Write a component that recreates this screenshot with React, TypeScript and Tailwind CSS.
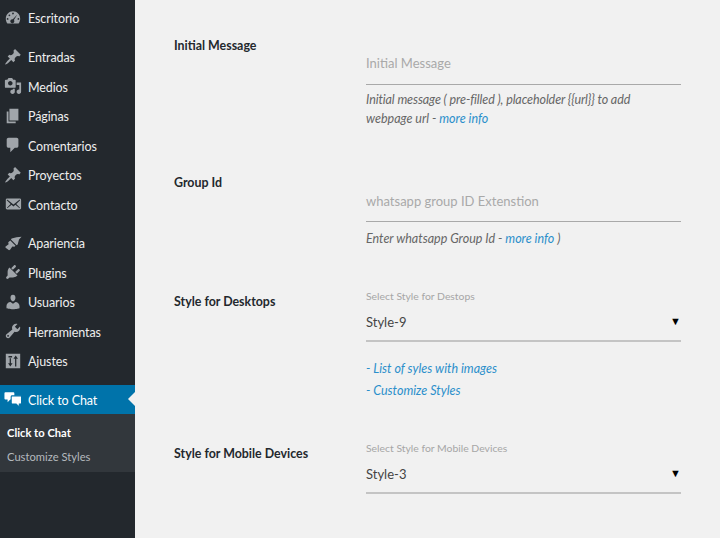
import React from "react";

const icons: Record<string, React.ReactNode> = {
  dash: <path fillRule="evenodd" d="M3.760 16h12.480c1.100-1.430 1.760-3.230 1.760-5.190 0-4.600-3.580-8.330-8-8.330s-8 3.730-8 8.330c0 1.960.66 3.760 1.760 5.190zM10 4c.55 0 1 .45 1 1s-.45 1-1 1-1-.45-1-1 .45-1 1-1zM6 6c.55 0 1 .45 1 1s-.45 1-1 1-1-.45-1-1 .45-1 1-1zm8.830.17L10.990 12.100c.32.390.51.880.51 1.400 0 1.240-1.010 2.250-2.250 2.250S7 14.740 7 13.500s1.010-2.250 2.250-2.250c.200 0 .39.030.57.080l5.010-5.160zM4 10c.55 0 1 .45 1 1s-.45 1-1 1-1-.45-1-1 .45-1 1-1zm12 0c.55 0 1 .45 1 1s-.45 1-1 1-1-.45-1-1 .45-1 1-1z" />,
  pin: <path d="M10.440 3.020l1.820-1.820 6.360 6.350-1.830 1.820c-1.050-.68-2.480-.57-3.410.36l-.75.75c-.92.93-1.040 2.350-.35 3.410l-1.830 1.820-2.410-2.410-2.800 2.790c-.42.42-3.380 2.710-3.800 2.290s1.860-3.390 2.280-3.810l2.790-2.790L4.100 9.360l1.830-1.820c1.050.69 2.480.57 3.400-.36l.75-.75c.93-.92 1.050-2.350.36-3.410z" />,
  media: <path fillRule="evenodd" d="M13 11V4c0-.55-.45-1-1-1h-1.670L9 1H5L3.670 3H2c-.55 0-1 .45-1 1v7c0 .55.45 1 1 1h10c.55 0 1-.45 1-1zM7 4.500c1.380 0 2.500 1.120 2.500 2.500S8.380 9.500 7 9.500 4.500 8.380 4.500 7 5.620 4.500 7 4.500zM14 6h5v10.500c0 1.380-1.120 2.500-2.500 2.500S14 17.880 14 16.500s1.120-2.500 2.500-2.500c.17 0 .34.020.5.050V9h-3V6zm-4 8.050V13h2v3.500c0 1.380-1.120 2.500-2.500 2.500S7 17.880 7 16.500 8.120 14 9.500 14c.17 0 .34.020.5.050z" />,
  pages: <path d="M6 15V2h10v13H6zm-1 1h8v2H3V5h2v11z" />,
  comment: <path d="M5 2h9c1.100 0 2 .9 2 2v7c0 1.100-.9 2-2 2h-2l-5 5v-5H5c-1.100 0-2-.9-2-2V4c0-1.100.9-2 2-2z" />,
  mail: <path d="M19 14.500v-9c0-.83-.67-1.500-1.500-1.500H3.490c-.83 0-1.500.67-1.500 1.500v9c0 .83.67 1.500 1.500 1.500H17.500c.83 0 1.500-.67 1.500-1.500zm-1.310-9.110c.33.33.15.67-.03.84L13.600 9.950l3.900 4.060c.12.14.2.36.06.51-.13.16-.43.15-.56.05l-4.370-3.730-2.140 1.950-2.130-1.950-4.370 3.730c-.13.100-.43.110-.56-.050-.14-.15-.06-.37.06-.51l3.900-4.060-4.060-3.720c-.18-.17-.36-.51-.03-.84s.67-.17.950.07l6.240 5.040 6.250-5.040c.28-.24.62-.4.950-.07z" />,
  brush: <path d="M19.500 3l-5.500.5-5.500 1.500-.8 1.200 6.300 6.300 1.200-.8 1.500-5.500L19.500 3zM7 7.200L12.800 13l-1.300 1.300-2.200-.4-2.600 3.600-1.100.5-3.800-2.800-.3-1.100 3.600-2.600-.4-2.200L7 7.200z" />,
  plug: <path d="M13.110 4.360L9.870 7.600 8 5.730l3.240-3.240c.35-.34 1.050-.2 1.560.32.52.51.66 1.210.31 1.550zm-8 1.770l.91-1.120 9.010 9.010-1.190.84c-.71.71-2.630 1.160-3.820 1.160H6.140L4.900 17.260c-.59.59-1.540.59-2.120 0-.59-.58-.59-1.530 0-2.120l1.240-1.240v-3.880c0-1.130.52-3.170 1.090-3.890zm7.260 3.970l3.240-3.240c.34-.35 1.040-.21 1.550.31.52.51.66 1.210.31 1.550l-3.240 3.250z" />,
  user: <path d="M10 9.250c-2.270 0-2.730-3.440-2.730-3.440C7 4.020 7.820 2 9.970 2c2.160 0 2.980 2.020 2.710 3.810 0 0-.41 3.440-2.680 3.440zm0 2.570L12.720 10c2.390 0 4.520 2.330 4.520 4.530v2.490s-3.650 1.130-7.240 1.130c-3.650 0-7.240-1.130-7.240-1.130v-2.490c0-2.250 1.940-4.480 4.470-4.480z" />,
  wrench: <path fillRule="evenodd" d="M16.680 9.770c-1.340 1.340-3.300 1.670-4.950.99l-5.410 6.520c-.99.99-2.590.99-3.580 0s-.99-2.590 0-3.570l6.520-5.420c-.68-1.650-.35-3.610.99-4.950 1.280-1.280 3.120-1.620 4.720-1.060l-2.890 2.890 2.820 2.820 2.860-2.860c.53 1.580.18 3.400-1.080 4.640zM3.810 16.210c.4.390 1.040.39 1.430 0 .4-.4.4-1.040 0-1.430-.39-.4-1.030-.4-1.430 0-.39.39-.39 1.030 0 1.430z" />,
  settings: <path fillRule="evenodd" d="M2 2h16v16H2V2zm3 2.500V6h4V4.500H5zM6.300 7v5.500H4.500L7 16l2.500-3.500H7.700V7H6.300zM13 4l-2.500 3.500h1.800V16h1.400V7.500h1.800L13 4z" />,
};

const Chat = () => (
  <svg viewBox="0 0 20 20" className="w-[18px] h-[18px] shrink-0 fill-white">
    <path d="M1.500 2.500h9a1 1 0 0 1 1 1v6a1 1 0 0 1-1 1H7l-3 3v-3H1.500a1 1 0 0 1-1-1v-6a1 1 0 0 1 1-1z" />
    <path className="stroke-[#0073aa]" strokeWidth="1.2" d="M9 6.500h9.500a1 1 0 0 1 1 1v7a1 1 0 0 1-1 1H17v3.500l-3.500-3.500H9a1 1 0 0 1-1-1v-7a1 1 0 0 1 1-1z" />
  </svg>
);

const Item = ({ icon, label, active }: { icon: string; label: string; active?: boolean }) => (
  <div className={`relative flex items-center h-[29.5px] pl-[3.5px] ${active ? "bg-[#0073aa]" : ""}`}>
    {active ? (
      <Chat />
    ) : (
      <svg viewBox="0 0 20 20" className="w-[18px] h-[18px] shrink-0 fill-[#a0a5aa]">{icons[icon]}</svg>
    )}
    <span className={`ml-[6.5px] pt-[4px] text-[12.5px] tracking-[-0.1px] ${active ? "text-white" : "text-[#eeeeee]"}`}>{label}</span>
    {active && (
      <span className="absolute right-0 top-[7px] w-0 h-0 border-y-[7.5px] border-y-transparent border-r-[7px] border-r-[#f1f1f1]" />
    )}
  </div>
);

const Link = ({ children }: { children: React.ReactNode }) => <span className="text-[#2b8fcb]">{children}</span>;

const Select = ({ caption, value }: { caption: string; value: string }) => (
  <div>
    <div className="text-[10.4px] leading-[14px] text-[#a6a6a6]">{caption}</div>
    <div className="flex items-center justify-between h-[35px] mt-[4px] text-[13px] text-[#444444] border-b-2 border-[#c4c4c4]">
      <span className="-mt-[1px]">{value}</span>
      <span className="-mt-[4px] text-[11px] text-black">▼</span>
    </div>
  </div>
);

const Input = ({ placeholder, pad }: { placeholder: string; pad: string }) => (
  <div className={`h-[55px] flex items-center text-[13px] text-[#a9a9a9] border-b border-[#a9a9a9] ${pad}`}>
    <span>{placeholder}</span>
  </div>
);

const Label = ({ children, top }: { children: React.ReactNode; top?: boolean }) => (
  <div className={`w-[192px] shrink-0 text-[12.4px] font-bold text-[#23282d] ${top ? "pt-[4px]" : "pt-[1px]"}`}>{children}</div>
);

export default function App() {
  return (
    <div className="flex w-[720px] h-[538px] overflow-hidden bg-[#f1f1f1] font-['Lato','Open_Sans',sans-serif]">
      <aside className="w-[135px] shrink-0 bg-[#23282d] pt-[3px]">
        <Item icon="dash" label="Escritorio" />
        <div className="mt-[9.5px]">
          <Item icon="pin" label="Entradas" />
          <Item icon="media" label="Medios" />
          <Item icon="pages" label="Páginas" />
          <Item icon="comment" label="Comentarios" />
          <Item icon="pin" label="Proyectos" />
          <Item icon="mail" label="Contacto" />
        </div>
        <div className="mt-[9px]">
          <Item icon="brush" label="Apariencia" />
          <Item icon="plug" label="Plugins" />
          <Item icon="user" label="Usuarios" />
          <Item icon="wrench" label="Herramientas" />
          <Item icon="settings" label="Ajustes" />
        </div>
        <div className="mt-[9px]">
          <Item icon="chat" label="Click to Chat" active />
        </div>
        <div className="bg-[#32373c] h-[58px] pl-[7px] pt-[9px] text-[11.2px]">
          <div className="font-bold text-white leading-[20px]">Click to Chat</div>
          <div className="text-[#b4b9be] leading-[20px] mt-[4px]">Customize Styles</div>
        </div>
      </aside>
      <main className="flex-1 pl-[39px] pr-[39px]">
        <section className="flex pt-[36px] h-[173px]">
          <Label>Initial Message</Label>
          <div className="flex-1 -mt-[6px]">
            <Input placeholder="Initial Message" pad="pt-[14px]" />
            <p className="mt-[5px] text-[12.5px] leading-[19px] italic text-[#666666]">
              <span className="tracking-[-0.1px]">Initial message ( pre-filled ), placeholder {"{{url}}"} to add</span>
              <br />
              webpage url - <Link>more info</Link>
            </p>
          </div>
        </section>
        <section className="flex h-[116px]">
          <Label>Group Id</Label>
          <div className="flex-1 -mt-[6px]">
            <Input placeholder="whatsapp group ID Extenstion" pad="pt-[16px]" />
            <p className="mt-[7px] text-[12.5px] leading-[19px] italic text-[#666666]">
              Enter whatsapp Group Id - <Link>more info</Link> )
            </p>
          </div>
        </section>
        <section className="flex h-[152px]">
          <Label top>Style for Desktops</Label>
          <div className="flex-1">
            <Select caption="Select Style for Destops" value="Style-9" />
            <div className="mt-[16px] text-[12.5px] leading-[22px] italic text-[#2b8fcb]">
              <div>- List of syles with images</div>
              <div>- Customize Styles</div>
            </div>
          </div>
        </section>
        <section className="flex">
          <Label top>Style for Mobile Devices</Label>
          <div className="flex-1">
            <Select caption="Select Style for Mobile Devices" value="Style-3" />
          </div>
        </section>
      </main>
    </div>
  );
}
